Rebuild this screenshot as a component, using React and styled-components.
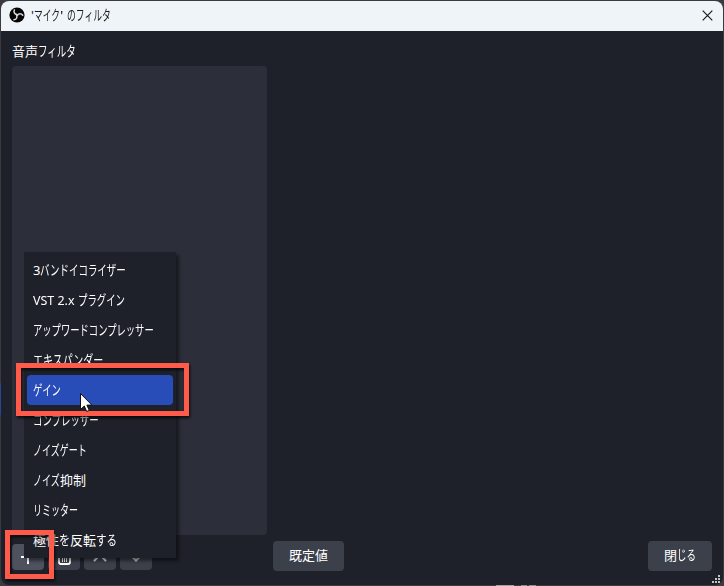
import React, { useLayoutEffect, useRef, useState } from "react";
import styled, { createGlobalStyle } from "styled-components";

const Global = createGlobalStyle`
  * { box-sizing: border-box; }
  body { margin: 0; background: #39373e; overflow: hidden; }
  button { font: inherit; color: inherit; border: 0; padding: 0; }
`;

const Desktop = styled.div`
  position: relative;
  width: 724px;
  height: 586px;
  padding: 1px;
  background:
    linear-gradient(#2b4593, #2b4593) 0 383px / 1px 32px no-repeat,
    linear-gradient(#a3a1a3, #a3a1a3) 496px 585px / 18px 1px no-repeat,
    linear-gradient(#8f8d90, #8f8d90) 521px 585px / 6px 1px no-repeat,
    linear-gradient(#8f8d90, #8f8d90) 529px 585px / 7px 1px no-repeat,
    #3b3a41;
  font-family: "Noto Sans", "Noto Sans CJK JP", sans-serif;
  font-size: 13px;
  color: #fff;
`;

const Dialog = styled.div`
  display: flex;
  flex-direction: column;
  width: 722px;
  height: 584px;
  border-radius: 8px;
  overflow: hidden;
  background: #1f212a;
`;

const TitleBar = styled.header`
  display: flex;
  align-items: center;
  flex: 0 0 30px;
  padding: 0 10px 2px 8px;
  background: #eff4f9;
  color: #1b1b1b;
`;

const Title = styled.div`
  flex: 1;
  margin-left: 6px;
`;

const Heading = styled.div`
  display: flex;
  align-items: center;
  height: 35px;
  padding: 4px 0 0 11px;
`;

const FilterList = styled.div`
  width: 255px;
  height: 469px;
  margin-left: 11px;
  border-radius: 4px;
  background: #2c2e39;
`;

const Footer = styled.footer`
  display: flex;
  align-items: flex-start;
  padding: 6px 11px 0 11px;
`;

const Tools = styled.div`
  display: flex;
  gap: 4px;
  width: 261px;
  padding-top: 3px;
`;

const ToolButton = styled.button`
  display: flex;
  align-items: center;
  justify-content: center;
  width: 32px;
  height: 26px;
  border-radius: 4px;
  background: ${(p) => (p.$active ? "#4e525e" : "#3c404b")};
`;

const PushButton = styled.button`
  display: flex;
  align-items: center;
  justify-content: center;
  width: ${(p) => p.$width}px;
  height: 30px;
  margin-left: ${(p) => (p.$end ? "auto" : 0)};
  padding-bottom: 2px;
  border-radius: 4px;
  background: #3c404b;
`;

const Menu = styled.ul`
  position: absolute;
  left: 24px;
  top: 252px;
  width: 152px;
  margin: 0;
  padding: 3px;
  list-style: none;
  background: #1f212a;
  box-shadow: 3px 3px 3px rgba(0, 0, 0, 0.45);
`;

const MenuItem = styled.li`
  display: flex;
  align-items: center;
  height: 30px;
  padding: 0 0 1px 6px;
  border-radius: 4px;
  background: ${(p) => (p.$selected ? "#284cb8" : "transparent")};
`;

const Highlight = styled.div`
  position: absolute;
  left: ${(p) => p.$x}px;
  top: ${(p) => p.$y}px;
  width: ${(p) => p.$w}px;
  height: ${(p) => p.$h}px;
  border: 5px solid #ff5a4a;
  filter: drop-shadow(1px 2px 1.5px rgba(0, 0, 0, 0.75));
`;

const Pointer = styled.svg`
  position: absolute;
  left: 79px;
  top: 392px;
`;

const SizeGrip = styled.svg`
  position: absolute;
  left: 712px;
  top: 575px;
`;

const LabelRow = styled.span`
  display: flex;
  align-items: baseline;
  height: 20px;
  line-height: 20px;
  white-space: pre;
`;

const FitBox = styled.span`
  display: block;
  width: ${(p) => p.$width}px;
  font-size: ${(p) => (p.$kana ? 14 : 13)}px;
`;

const FitText = styled.span`
  display: inline-block;
  transform-origin: 0 50%;
`;

/* Condenses a run of text to the given advance width. */
function Run({ width, children }) {
  const ref = useRef(null);
  const [scale, setScale] = useState(1);
  useLayoutEffect(() => {
    setScale(width / ref.current.offsetWidth);
  }, [width, children]);
  return (
    <FitBox $width={width} $kana={/^[\u3040-\u30ff]/.test(children)}>
      <FitText ref={ref} style={{ transform: `scaleX(${scale})` }}>
        {children}
      </FitText>
    </FitBox>
  );
}

/* Kana are set narrower than kanji and Latin, so a label is a list of runs. */
const Label = ({ runs }) => (
  <LabelRow>
    {runs.map(([text, width]) => (
      <Run key={text} width={width}>{text}</Run>
    ))}
  </LabelRow>
);

const FILTERS = [
  { id: "eq", runs: [["3", 7], ["バンドイコライザー", 86]] },
  { id: "vst", runs: [["VST 2.x ", 45], ["プラグイン", 47]] },
  { id: "upward", runs: [["アップワードコンプレッサー", 121]] },
  { id: "expander", runs: [["エキスパンダー", 70]] },
  { id: "gain", runs: [["ゲイン", 28]] },
  { id: "compressor", runs: [["コンプレッサー", 66]] },
  { id: "gate", runs: [["ノイズゲート", 54]] },
  { id: "suppress", runs: [["ノイズ", 27], ["抑制", 26]] },
  { id: "limiter", runs: [["リミッター", 45]] },
  { id: "polarity", runs: [["極性", 26], ["を", 11], ["反転", 26], ["する", 21]] },
];

const AppLogo = () => (
  <svg width="16" height="16" viewBox="0 0 16 16">
    <circle cx="8" cy="8" r="7.6" fill="#050505" />
    <g fill="none" stroke="#d5d7da" strokeWidth="1.5" strokeLinecap="round">
      <path d="M5.4 2.9C4.4 5 5.4 7.2 8 7.5" />
      <path d="M5.4 2.9C4.4 5 5.4 7.2 8 7.5" transform="rotate(120 8 8)" />
      <path d="M5.4 2.9C4.4 5 5.4 7.2 8 7.5" transform="rotate(240 8 8)" />
    </g>
  </svg>
);

export default function App() {
  return (
    <Desktop>
      <Global />
      <Dialog>
        <TitleBar>
          <AppLogo />
          <Title>
            <Label runs={[["'", 3], ["マイク", 26], ["' ", 7], ["のフィルタ", 44]]} />
          </Title>
          <svg width="11" height="11" viewBox="0 0 11 11">
            <path d="M.7.7l9.6 9.6M10.3.7L.7 10.3" stroke="#1b1b1b" strokeWidth="1.2" />
          </svg>
        </TitleBar>
        <Heading><Label runs={[["音声", 26], ["フィルタ", 38]]} /></Heading>
        <FilterList />
        <Footer>
          <Tools>
            <ToolButton $active>
              <svg width="16" height="16" viewBox="0 0 16 16">
                <path d="M8 1v14M1 8h14" stroke="#fff" strokeWidth="2" />
              </svg>
            </ToolButton>
            <ToolButton>
              <svg width="16" height="16" viewBox="0 0 16 16" fill="none" stroke="#fff">
                <path d="M1 3h14M3 4v9q0 2 2 2h7q2 0 2-2V4" strokeWidth="1.8" />
                <path d="M6.5 5v8M8.5 5v8M10.5 5v8" />
              </svg>
            </ToolButton>
            <ToolButton>
              <svg width="16" height="16" viewBox="0 0 16 16">
                <path d="M2 12l6-6 6 6" fill="none" stroke="#dcdde0" strokeWidth="2" />
              </svg>
            </ToolButton>
            <ToolButton>
              <svg width="16" height="16" viewBox="0 0 16 16">
                <path d="M2 5.5l6 6 6-6" fill="none" stroke="#c0c1c6" strokeWidth="2.2" />
              </svg>
            </ToolButton>
          </Tools>
          <PushButton $width={71}><Label runs={[["既定値", 39]]} /></PushButton>
          <PushButton $width={64} $end><Label runs={[["閉", 13], ["じる", 19]]} /></PushButton>
        </Footer>
      </Dialog>
      <Menu>
        {FILTERS.map(({ id, runs }) => (
          <MenuItem key={id} $selected={id === "gain"}>
            <Label runs={runs} />
          </MenuItem>
        ))}
      </Menu>
      <Highlight $x={16} $y={363} $w={173} $h={53} />
      <Highlight $x={5} $y={530} $w={49} $h={49} />
      <Pointer width="14" height="20" viewBox="0 0 14 20">
        <path d="M1.5 1.5v16l3.8-3.5 2.4 5.5 2.6-1.1-2.4-5.3h5z" fill="#fff" stroke="#111" />
      </Pointer>
      <SizeGrip width="8" height="8" viewBox="0 0 8 8" fill="#c4c4c4">
        <path d="M6 0h2v2H6zM3 3h2v2H3zM6 3h2v2H6zM0 6h2v2H0zM3 6h2v2H3zM6 6h2v2H6z" />
      </SizeGrip>
    </Desktop>
  );
}
